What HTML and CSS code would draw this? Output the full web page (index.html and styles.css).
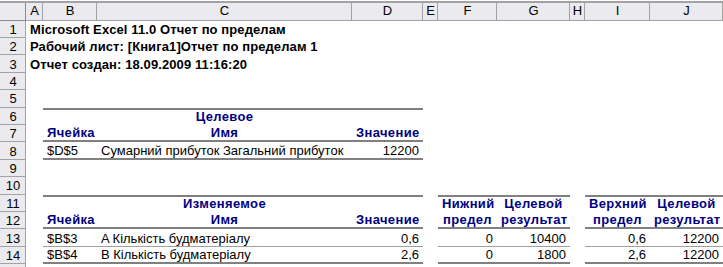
FILE: index.html
```html
<!DOCTYPE html>
<html lang="ru">
<head>
<meta charset="utf-8">
<title>Отчет по пределам</title>
<link rel="stylesheet" href="styles.css">
</head>
<body>
<table class="sheet">
<colgroup>
<col class="w-rh"><col class="w-a"><col class="w-b"><col class="w-c"><col class="w-d"><col class="w-e"><col class="w-f"><col class="w-g"><col class="w-h"><col class="w-i"><col class="w-j">
</colgroup>
<tr class="hdr">
<th class="corner"></th><th class="ch">A</th><th class="ch">B</th><th class="ch">C</th><th class="ch">D</th><th class="ch">E</th><th class="ch">F</th><th class="ch">G</th><th class="ch">H</th><th class="ch">I</th><th class="ch">J</th>
</tr>
<tr class="r"><th class="rh">1</th><td class="title">Microsoft Excel 11.0 Отчет по пределам</td><td></td><td></td><td></td><td></td><td></td><td></td><td></td><td></td><td></td></tr>
<tr class="r"><th class="rh">2</th><td class="title">Рабочий лист: [Книга1]Отчет по пределам 1</td><td></td><td></td><td></td><td></td><td></td><td></td><td></td><td></td><td></td></tr>
<tr class="r"><th class="rh">3</th><td class="title">Отчет создан: 18.09.2009 11:16:20</td><td></td><td></td><td></td><td></td><td></td><td></td><td></td><td></td><td></td></tr>
<tr class="r"><th class="rh">4</th><td></td><td></td><td></td><td></td><td></td><td></td><td></td><td></td><td></td><td></td></tr>
<tr class="r"><th class="rh">5</th><td></td><td></td><td></td><td></td><td></td><td></td><td></td><td></td><td></td><td></td></tr>
<tr class="r"><th class="rh">6</th><td></td><td class="tt"></td><td class="tt hd ctr">Целевое</td><td class="tt"></td><td></td><td></td><td></td><td></td><td></td><td></td></tr>
<tr class="r"><th class="rh">7</th><td></td><td class="hb hd">Ячейка</td><td class="hb hd ctr">Имя</td><td class="hb hd num">Значение</td><td></td><td></td><td></td><td></td><td></td><td></td></tr>
<tr class="r"><th class="rh">8</th><td></td><td class="tb">$D$5</td><td class="tb">Сумарний прибуток Загальний прибуток</td><td class="tb num">12200</td><td></td><td></td><td></td><td></td><td></td><td></td></tr>
<tr class="r"><th class="rh">9</th><td></td><td></td><td></td><td></td><td></td><td></td><td></td><td></td><td></td><td></td></tr>
<tr class="r"><th class="rh">10</th><td></td><td></td><td></td><td></td><td></td><td></td><td></td><td></td><td></td><td></td></tr>
<tr class="r"><th class="rh">11</th><td></td><td class="tt"></td><td class="tt hd ctr">Изменяемое</td><td class="tt"></td><td></td><td class="tt hd ctr">Нижний</td><td class="tt hd ctr">Целевой</td><td></td><td class="tt hd ctr">Верхний</td><td class="tt hd ctr">Целевой</td></tr>
<tr class="r"><th class="rh">12</th><td></td><td class="hb hd">Ячейка</td><td class="hb hd ctr">Имя</td><td class="hb hd num">Значение</td><td></td><td class="hb hd ctr">предел</td><td class="hb hd ctr">результат</td><td></td><td class="hb hd ctr">предел</td><td class="hb hd ctr">результат</td></tr>
<tr class="r"><th class="rh">13</th><td></td><td class="sb">$B$3</td><td class="sb">A Кількість будматеріалу</td><td class="sb num">0,6</td><td></td><td class="sb num">0</td><td class="sb num">10400</td><td></td><td class="sb num">0,6</td><td class="sb num">12200</td></tr>
<tr class="r"><th class="rh">14</th><td></td><td class="tb">$B$4</td><td class="tb">B Кількість будматеріалу</td><td class="tb num">2,6</td><td></td><td class="tb num">0</td><td class="tb num">1800</td><td></td><td class="tb num">2,6</td><td class="tb num">12200</td></tr>
<tr class="r"><th class="rh"></th><td></td><td></td><td></td><td></td><td></td><td></td><td></td><td></td><td></td><td></td></tr>
</table>
</body>
</html>
```
FILE: styles.css
```css
html, body {
  margin: 0;
  padding: 0;
  background: #ffffff;
  overflow: hidden;
}
body {
  padding-top: 1px;
  font-family: "Liberation Sans", Arial, sans-serif;
  font-size: 13px;
  color: #000000;
}
.sheet {
  border-collapse: separate;
  border-spacing: 0;
  table-layout: fixed;
  width: 723px;
}
.w-rh { width: 26px; }
.w-a { width: 17px; }
.w-b { width: 54px; }
.w-c { width: 255px; }
.w-d { width: 71px; }
.w-e { width: 15px; }
.w-f { width: 59px; }
.w-g { width: 73px; }
.w-h { width: 15px; }
.w-i { width: 65px; }
.w-j { width: 73px; }

.sheet th,
.sheet td {
  padding: 0;
  line-height: 15px;
  white-space: nowrap;
  overflow: visible;
  font-weight: normal;
}
.hdr { height: 19.5px; }
.r { height: 17.42px; }

.ch,
.corner {
  background: #ebeaef;
  text-align: center;
  vertical-align: middle;
  padding-top: 2px;
  box-shadow: inset 0 2px 0 #a3a3a3, inset -1px -1px 0 #a3a3a3;
}
.corner {
  box-shadow: inset 0 2px 0 #a3a3a3, inset -1px -1px 0 #8c8c8c;
}
.rh {
  background: #ebeaef;
  text-align: center;
  vertical-align: middle;
  box-shadow: inset -1px -1px 0 #a3a3a3;
}
.sheet td {
  vertical-align: bottom;
  padding: 0 4px 1px 4px;
  text-align: left;
}
.sheet td.title {
  font-weight: bold;
  padding-left: 4px;
  letter-spacing: 0.1px;
}
.sheet td.hd {
  font-weight: bold;
  color: #000080;
  letter-spacing: 0.35px;
}
.sheet td.ctr { text-align: center; }
.sheet td.num { text-align: right; }
.tt { box-shadow: inset 0 2px 0 #808080; }
.hb { box-shadow: inset 0 -2px 0 #808080; }
.tb { box-shadow: inset 0 -2px 0 #808080; }
.sb { box-shadow: inset 0 -1px 0 #a0a0a0; }
.sheet td.hb,
.sheet td.tb { padding-bottom: 2px; }
```
